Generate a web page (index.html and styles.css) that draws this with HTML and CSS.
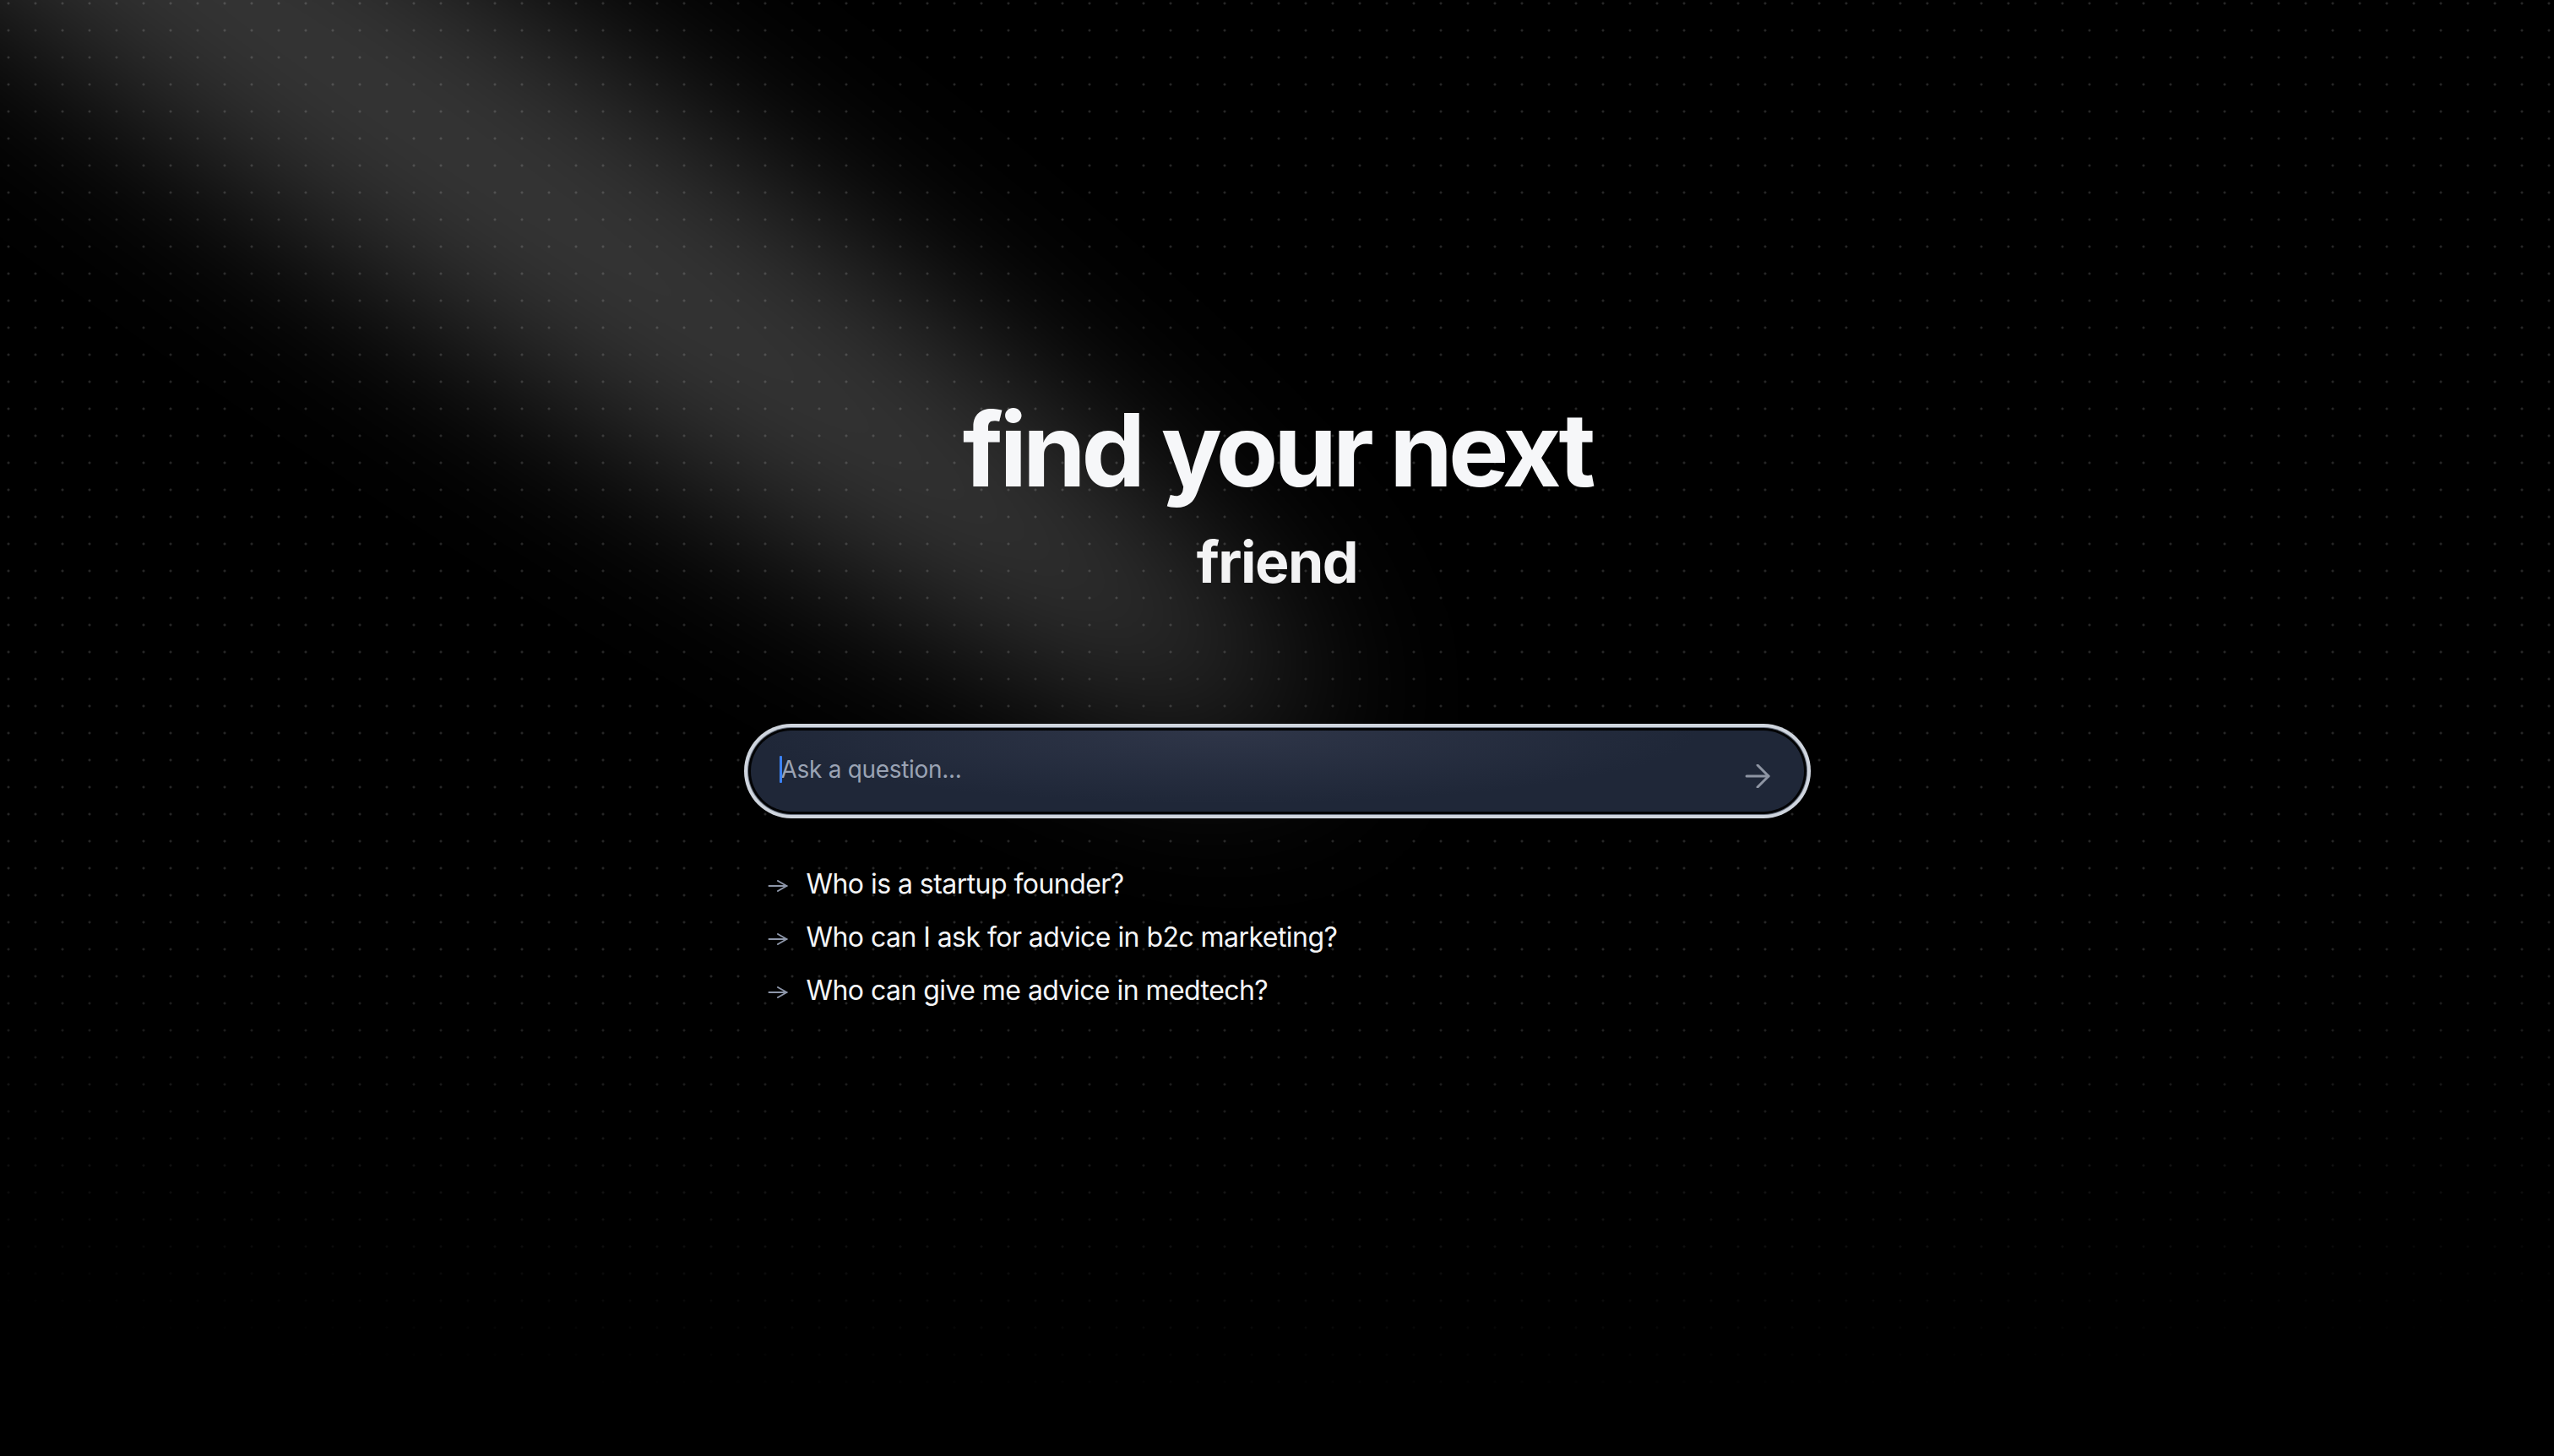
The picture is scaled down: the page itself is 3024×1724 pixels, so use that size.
FILE: index.html
```html
<!DOCTYPE html>
<html lang="en">
<head>
<meta charset="utf-8">
<title>find your next friend</title>
<link rel="stylesheet" href="styles.css">
</head>
<body>
<div class="page">
  <div class="dots"></div>
  <svg class="spotlight" xmlns="http://www.w3.org/2000/svg" viewBox="0 0 3787 2842" fill="none">
    <g filter="url(#spotblur)">
      <ellipse cx="1924.71" cy="273.501" rx="1924.71" ry="273.501" transform="matrix(-0.822377 -0.568943 -0.568943 0.822377 3631.88 2291.09)" fill="white" fill-opacity="0.21"></ellipse>
    </g>
    <defs>
      <filter id="spotblur" x="0.860352" y="0.838989" width="3785.16" height="2840.26" filterUnits="userSpaceOnUse" color-interpolation-filters="sRGB">
        <feFlood flood-opacity="0" result="BackgroundImageFix"></feFlood>
        <feBlend mode="normal" in="SourceGraphic" in2="BackgroundImageFix" result="shape"></feBlend>
        <feGaussianBlur stdDeviation="151" result="blur"></feGaussianBlur>
      </filter>
    </defs>
  </svg>
  <main class="hero">
    <h1 class="title">find your next</h1>
    <p class="word">friend</p>
    <div class="stack">
      <form class="ask" onsubmit="return false;">
        <span class="caret"></span>
        <input class="ask-input" type="text" placeholder="Ask a question...">
        <button class="send" type="submit" aria-label="Send">
          <svg width="30" height="28" viewBox="0 0 30 28" fill="none" stroke="currentColor" stroke-width="3" stroke-linecap="round" stroke-linejoin="round"><path d="M2 14H28"/><path d="M15 1L28 14L15 27"/></svg>
        </button>
      </form>
      <ul class="suggestions">
        <li class="suggestion"><svg class="s-arrow" width="24" height="14" viewBox="0 0 24 14" fill="none" stroke="currentColor" stroke-width="2" stroke-linecap="round" stroke-linejoin="round"><path d="M1.5 7H22.5"/><path d="M12 1L22.5 7L12 13"/></svg><span>Who is a startup founder?</span></li>
        <li class="suggestion"><svg class="s-arrow" width="24" height="14" viewBox="0 0 24 14" fill="none" stroke="currentColor" stroke-width="2" stroke-linecap="round" stroke-linejoin="round"><path d="M1.5 7H22.5"/><path d="M12 1L22.5 7L12 13"/></svg><span>Who can I ask for advice in b2c marketing?</span></li>
        <li class="suggestion"><svg class="s-arrow" width="24" height="14" viewBox="0 0 24 14" fill="none" stroke="currentColor" stroke-width="2" stroke-linecap="round" stroke-linejoin="round"><path d="M1.5 7H22.5"/><path d="M12 1L22.5 7L12 13"/></svg><span>Who can give me advice in medtech?</span></li>
      </ul>
    </div>
  </main>
</div>
</body>
</html>
```
FILE: styles.css
```css
* { box-sizing: border-box; }

html, body {
  margin: 0;
  padding: 0;
  background: #000;
}

body {
  font-family: Inter, "Noto Sans", "Liberation Sans", sans-serif;
  color: #f5f6f8;
  overflow: hidden;
}

.page {
  position: relative;
  width: 100%;
  height: 100vh;
  overflow: hidden;
  background: #000;
}

.dots {
  position: absolute;
  inset: 0;
  background-image: radial-gradient(circle, rgba(255,255,255,0.15) 1.1px, rgba(255,255,255,0) 1.9px);
  background-size: 32px 32px;
  background-position: -6px -12px;
  -webkit-mask-image: radial-gradient(ellipse 150% 100% at 50% 0%, #000 68%, transparent 97%);
  mask-image: radial-gradient(ellipse 150% 100% at 50% 0%, #000 68%, transparent 97%);
  pointer-events: none;
}

.spotlight {
  position: absolute;
  left: 480px;
  top: -160px;
  width: 84%;
  height: 169%;
  transform: translate(-50%, -40%);
  pointer-events: none;
  z-index: 1;
}

.hero {
  position: relative;
  z-index: 2;
  display: flex;
  flex-direction: column;
  align-items: center;
  padding-top: 473px;
}

.title {
  margin: 0;
  font-size: 120px;
  line-height: 120px;
  font-weight: 700;
  letter-spacing: -5px;
  color: #f6f7f9;
}

.word {
  margin: 32px 0 0;
  font-size: 68px;
  line-height: 80px;
  font-weight: 700;
  letter-spacing: -1.5px;
  color: #f3f3f4;
}

.stack {
  width: 1247px;
  margin-top: 160px;
}

.ask {
  position: relative;
  display: flex;
  align-items: center;
  height: 96px;
  border-radius: 48px;
  background:
    radial-gradient(ellipse 45% 90% at 45% 0%, rgba(60,66,86,0.55), rgba(60,66,86,0) 100%),
    #1f2738;
  box-shadow: 0 0 0 3px #020305, 0 0 0 4px #6b7482, 0 0 0 8px #cfd5de;
  margin: 0;
}

.caret {
  position: absolute;
  left: 34px;
  top: 30px;
  width: 3px;
  height: 32px;
  border-radius: 1px;
  background: #3b82f6;
}

.ask-input {
  flex: 1;
  min-width: 0;
  height: 100%;
  padding: 0 0 4px 36px;
  border: 0;
  outline: none;
  background: transparent;
  font-family: Inter, "Noto Sans", "Liberation Sans", sans-serif;
  font-size: 28px;
  letter-spacing: -0.3px;
  color: #e5e7eb;
  caret-color: transparent;
}

.ask-input::placeholder {
  color: #9aa3b4;
}

.send {
  display: flex;
  align-items: center;
  justify-content: center;
  width: 56px;
  height: 56px;
  margin: 12px 27px 0 0;
  padding: 0;
  border: 0;
  background: transparent;
  color: #8e95a3;
  cursor: pointer;
}

.suggestions {
  list-style: none;
  margin: 62px 0 0;
  padding: 0 0 0 20px;
  display: flex;
  flex-direction: column;
  gap: 15px;
}

.suggestion {
  display: flex;
  align-items: center;
  font-size: 32px;
  line-height: 48px;
  font-weight: 400;
  letter-spacing: -0.55px;
  color: #f4f5f7;
}

.s-arrow {
  flex: none;
  margin: 4px 22px 0 0;
  color: #8e97aa;
}
```
